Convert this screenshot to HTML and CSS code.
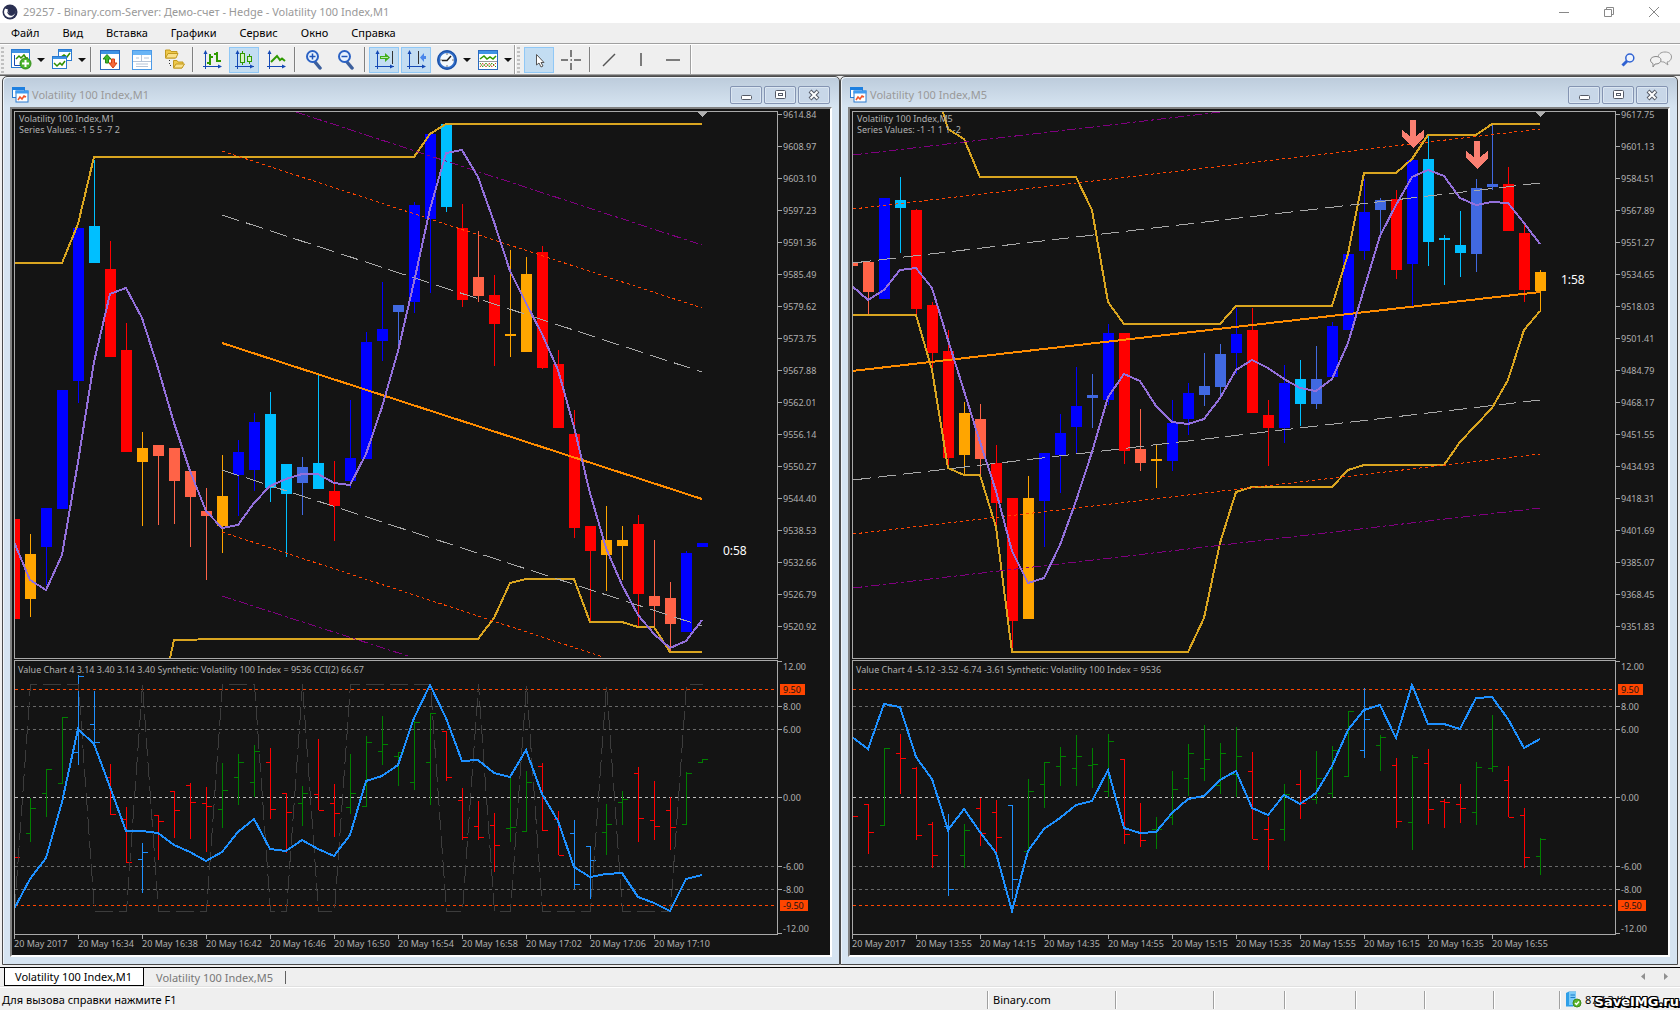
FILE: index.html
```html
<!DOCTYPE html>
<html lang="ru">
<head>
<meta charset="utf-8">
<title>29257 - Binary.com-Server: Демо-счет - Hedge - Volatility 100 Index,M1</title>
<link rel="stylesheet" href="styles.css">
</head>
<body>
<header class="titlebar">
  <svg class="app-logo" viewBox="0 0 16 16" width="16" height="16"><circle cx="8" cy="8" r="7.5" fill="#2a3052"/><path d="M3.2 4.6A5.6 5.6 0 1 0 13 6.2 4 4 0 1 1 7 4.4 2.8 2.8 0 0 0 7.4 9.2 2.6 2.6 0 0 1 5.8 5 3.4 3.4 0 0 1 3.2 4.6Z" fill="#fff"/><circle cx="9.6" cy="6.6" r="2.6" fill="#2a3052"/></svg>
  <h1 class="app-title">29257 - Binary.com-Server: Демо-счет - Hedge - Volatility 100 Index,M1</h1>
  <div class="caption-buttons">
    <button aria-label="Свернуть"><svg width="12" height="12"><path d="M1 6.5H11" stroke="#888" fill="none"/></svg></button>
    <button aria-label="Развернуть"><svg width="12" height="12"><path d="M1.500 3.500H8.500V10.500H1.500ZM3.500 3V1.500H10.500V8.500H9" stroke="#888" fill="none"/></svg></button>
    <button aria-label="Закрыть"><svg width="12" height="12"><path d="M1 1L11 11M11 1L1 11" stroke="#888" fill="none"/></svg></button>
  </div>
</header>

<nav class="menubar">
  <button>Файл</button><button>Вид</button><button>Вставка</button><button>Графики</button><button>Сервис</button><button>Окно</button><button>Справка</button>
</nav>

<div class="toolbar">
  <div class="tool-group">
    <i class="grip"></i>
    <button class="tool drop first" aria-label="Новый график"><svg width="21" height="21"><rect x=".5" y=".5" width="18" height="18" fill="#fff" stroke="#2a7ad0"/><path d="M1 1H18V4H1Z" fill="#3f93e4"/><path d="M3.500 6V16.500H15" stroke="#1549b5" fill="none"/><path d="M5 10L8 7 10 9 13 6 15 9H17" stroke="#2f8f00" stroke-width="1.500" fill="none"/><circle cx="14.500" cy="14.500" r="5.500" fill="#4cb52c" stroke="#2e8a14"/><path d="M14.500 11V18M11 14.500H18" stroke="#fff" stroke-width="2"/></svg><i class="caret"></i></button>
    <button class="tool drop" aria-label="Профили"><svg width="21" height="21"><rect x="6.500" y=".5" width="13" height="11" fill="#fff" stroke="#2a7ad0"/><path d="M7 1H19V3H7Z" fill="#3f93e4"/><path d="M9 8L12 6 15 8 18 4" stroke="#2f8f00" stroke-width="1.500" fill="none"/><rect x=".5" y="7.500" width="14" height="12" fill="#fff" stroke="#2a7ad0"/><path d="M1 8H14V10H1Z" fill="#3f93e4"/><path d="M2 14L5 17 8 14 10 16 13 12" stroke="#2f8f00" stroke-width="1.500" fill="none"/></svg><i class="caret"></i></button>
    <i class="sep"></i>
    <button class="tool" aria-label="Обзор рынка"><svg width="20" height="20"><rect x=".5" y=".5" width="19" height="19" fill="#fff" stroke="#2a6ac0"/><path d="M1 1H19V4H1Z" fill="#3f93e4"/><path d="M3 9L7 4.500 11 9H8.500V13H5.500V9Z" fill="#3fb82a" stroke="#25841a"/><path d="M9 13L13 18 17 13H14.500V9H11.500V13Z" fill="#f46a3c" stroke="#d63e12"/></svg></button>
    <button class="tool" aria-label="Окно данных"><svg width="20" height="20"><rect x=".5" y=".5" width="19" height="19" fill="#fff" stroke="#4a9ae8"/><path d="M1 1H19V5H1Z" fill="#69b4f5"/><path d="M9.500 5V11M1 11.500H19M4 8H7M12 8H17M4 14H16M4 16.500H16" stroke="#b7c4d6" fill="none"/></svg></button>
    <button class="tool" aria-label="Навигатор"><svg width="21" height="21"><path d="M1.500 9V1H6L7 2.500H13V4L11 9Z" fill="#eec84a" stroke="#c29a20"/><path d="M1.500 9L4 4.500H14L12 9Z" fill="#f9e08a" stroke="#c29a20"/><path d="M5.500 11V16.500H9" stroke="#333" stroke-dasharray="1 2" fill="none"/><path d="M9.500 19V11.500H13L14 13H19V15L18 19Z" fill="#eec84a" stroke="#c29a20"/><path d="M9.500 19L12 15H20.500L18 19Z" fill="#f9e08a" stroke="#c29a20"/></svg></button>
    <i class="sep"></i>
    <button class="tool" aria-label="Бары"><svg width="20" height="20"><path d="M3.500 2V19M1 16.500H18" stroke="#1549b5" fill="none"/><path d="M1.500 4L3.500 0 5.500 4ZM16 14.500L20 16.500 16 18.500Z" fill="#1549b5"/><path d="M8 4V15M5 13H8M8 7H11M15 2V12M12 4H15M15 11H19" stroke="#2f9a00" stroke-width="2" fill="none"/></svg></button>
    <button class="tool on" aria-label="Японские свечи"><svg width="20" height="20"><path d="M3.500 2V19M1 16.500H20" stroke="#1549b5" fill="none"/><path d="M1.500 4L3.500 0 5.500 4ZM16 14.500L20 16.500 16 18.500Z" fill="#1549b5"/><path d="M8.500 1V15M15.500 4V14" stroke="#2f9a00"/><rect x="6.500" y="3.500" width="4" height="9" fill="#d6f2c4" stroke="#2f9a00"/><rect x="13.500" y="6.500" width="4" height="5" fill="#d6f2c4" stroke="#2f9a00"/></svg></button>
    <button class="tool" aria-label="Линия"><svg width="20" height="20"><path d="M3.500 2V19M1 16.500H18" stroke="#1549b5" fill="none"/><path d="M1.500 4L3.500 0 5.500 4ZM16 14.500L20 16.500 16 18.500Z" fill="#1549b5"/><path d="M5 12L11 6 14 10 16 8.500 19 11" stroke="#2f9a00" stroke-width="2" fill="none"/></svg></button>
    <i class="sep"></i>
    <button class="tool" aria-label="Увеличить"><svg width="20" height="20"><path d="M11 12L16 18" stroke="#3c5f9c" stroke-width="3.500" stroke-linecap="round"/><circle cx="8.500" cy="6.500" r="5.500" fill="#e9f3fe" stroke="#2b62c4" stroke-width="2"/><path d="M8.500 3.500V9.500M5.500 6.500H11.500" stroke="#1f55b8" stroke-width="1.500"/></svg></button>
    <button class="tool" aria-label="Уменьшить"><svg width="20" height="20"><path d="M11 12L16 18" stroke="#3c5f9c" stroke-width="3.500" stroke-linecap="round"/><circle cx="8.500" cy="6.500" r="5.500" fill="#e9f3fe" stroke="#2b62c4" stroke-width="2"/><path d="M5.500 6.500H11.500" stroke="#1f55b8" stroke-width="1.500"/></svg></button>
    <i class="sep"></i>
    <button class="tool on" aria-label="Автопрокрутка"><svg width="20" height="20"><path d="M3.500 2V19M1 16.500H20" stroke="#1549b5" fill="none"/><path d="M1.500 4L3.500 0 5.500 4ZM16 14.500L20 16.500 16 18.500Z" fill="#1549b5"/><path d="M18.500 1V14" stroke="#333"/><path d="M6 6H11V3L16 7.500 11 12V9H6Z" fill="#3fae1a"/><path d="M7 7.500H14" stroke="#b8ecaa"/></svg></button>
    <button class="tool on" aria-label="Сдвиг графика"><svg width="20" height="20"><path d="M3.500 2V19M1 16.500H18" stroke="#1549b5" fill="none"/><path d="M1.500 4L3.500 0 5.500 4ZM16 14.500L20 16.500 16 18.500Z" fill="#1549b5"/><path d="M12.500 1V14" stroke="#333"/><path d="M20 6H18V3L14 7.500 18 12V9H20Z" fill="#4a86ea"/></svg></button>
    <button class="tool drop" aria-label="Периоды"><svg width="20" height="20"><circle cx="10" cy="10" r="8.500" fill="#f5f9fd" stroke="#2f6cc8" stroke-width="3"/><circle cx="10" cy="10" r="9.200" fill="none" stroke="#1a4a9a"/><path d="M10 10.500L14 6M10.500 10.500H5" stroke="#222" stroke-width="1.500"/><path d="M10 3V5M10 15V17M3 10H5M15 10H17" stroke="#777"/></svg><i class="caret"></i></button>
    <button class="tool drop" aria-label="Шаблоны"><svg width="20" height="20"><rect x=".5" y=".5" width="19" height="19" fill="#fff" stroke="#2a6ac0"/><path d="M1 1H19V4H1Z" fill="#3f93e4"/><path d="M2 9L6 6 9 9 12 7 15 9 18 6" stroke="#2f9a00" stroke-width="1.500" fill="none"/><path d="M1 11.500H19" stroke="#999"/><path d="M2 17L5 13 8 17 11 13 14 17 18 13" stroke="#d5452c" stroke-dasharray="2 1" fill="none"/><path d="M2 13L5 17 8 13 11 17 14 13 18 17" stroke="#2f9a00" stroke-dasharray="2 1" fill="none"/></svg><i class="caret"></i></button>
  </div>
  <div class="tool-group">
    <i class="grip"></i>
    <button class="tool on" aria-label="Курсор"><svg width="20" height="20"><path d="M7.500 4.500V15L10 13 12 17 14 16 12 12.500H15Z" fill="#fff" stroke="#555"/></svg></button>
    <button class="tool" aria-label="Перекрестие"><svg width="20" height="20"><path d="M10 0V7M10 13V20M0 10H7M13 10H20M9.500 10H11" stroke="#555" stroke-width="1.500"/></svg></button>
    <i class="sep"></i>
    <button class="tool" aria-label="Трендовая линия"><svg width="20" height="20"><path d="M4 16L16 4" stroke="#555" stroke-width="1.500"/></svg></button>
    <button class="tool" aria-label="Вертикальная линия"><svg width="20" height="20"><path d="M10 3V16" stroke="#555" stroke-width="1.500"/></svg></button>
    <button class="tool" aria-label="Горизонтальная линия"><svg width="20" height="20"><path d="M3 10H17" stroke="#555" stroke-width="1.500"/></svg></button>
  </div>
  <div class="tool-right">
    <button aria-label="Поиск"><svg width="14" height="14"><path d="M1.500 12.500L6 8" stroke="#2f62d2" stroke-width="3"/><circle cx="8.800" cy="5" r="4" fill="#eef4fd" stroke="#2f62d2" stroke-width="1.500"/></svg></button>
    <button aria-label="Чат"><svg width="22" height="17"><path d="M8 7C8 3 11 1 15 1S21.500 3 21.500 6 19 11 17 11L18 14 14 11C10 11 8 9 8 7Z" fill="#f2f2f2" stroke="#999"/><path d="M.5 9C.5 7 3 5.500 6 5.500S11 7 11 9 9 13 6 13H5L3 16V12.500C1.500 12 .5 10.500 .5 9Z" fill="#f2f2f2" stroke="#888"/></svg></button>
  </div>
</div>

<main class="workspace">
  <section class="window">
    <div class="window-bar">
      <svg class="window-icon" width="17" height="17"><rect x=".5" y=".5" width="12" height="10" fill="#fff" stroke="#2a7ad0"/><path d="M0 0H13V3H0Z" fill="#1e80e0"/><rect x="4" y="4" width="12" height="11" fill="#fff" stroke="#2a7ad0"/><path d="M3.500 3.500H16.500V6.500H3.500Z" fill="#3f9bf0"/><path d="M6 13L8 10 10 12 12 9 14 10" stroke="#f0552a" stroke-width="1.500" fill="none"/></svg>
      <h2>Volatility 100 Index,M1</h2>
      <div class="window-buttons">
        <button aria-label="Свернуть"><svg width="14" height="12"><rect x="2.500" y="6.500" width="10" height="4" rx="1" fill="#fff" stroke="#555a66"/></svg></button>
        <button aria-label="Развернуть"><svg width="14" height="12"><rect x="2.500" y="1.500" width="10" height="8" rx="1" fill="#fff" stroke="#555a66"/><rect x="5.500" y="4.500" width="4" height="2" fill="#fff" stroke="#555a66"/></svg></button>
        <button aria-label="Закрыть"><svg width="14" height="12"><path d="M3 2L11 10M11 2L3 10" stroke="#555a66" stroke-width="4"/><path d="M3.500 2.500L10.500 9.500M10.500 2.500L3.500 9.500" stroke="#fff" stroke-width="2"/></svg></button>
      </div>
    </div>
    <div class="chart">
      <div class="plot">
        <svg class="price-plot" data-chart="m1" viewBox="0 112 762 546" preserveAspectRatio="none"></svg>
        <p class="legend">Volatility 100 Index,M1<br>Series Values: -1 5 5 -7 2</p>
        <span class="countdown" style="left:92.9%;top:79.5%">0:58</span>
      </div>
      <ol class="price-scale"><li>9614.84</li><li>9608.97</li><li>9603.10</li><li>9597.23</li><li>9591.36</li><li>9585.49</li><li>9579.62</li><li>9573.75</li><li>9567.88</li><li>9562.01</li><li>9556.14</li><li>9550.27</li><li>9544.40</li><li>9538.53</li><li>9532.66</li><li>9526.79</li><li>9520.92</li></ol>
      <div class="plot">
        <svg class="value-plot" data-chart="m1" viewBox="0 661 762 273" preserveAspectRatio="none"></svg>
        <p class="legend sub">Value Chart 4 3.14 3.40 3.14 3.40 Synthetic: Volatility 100 Index = 9536 CCI(2) 66.67</p>
      </div>
      <ol class="value-scale"><li class="top">12.00</li><li class="level"><b>9.50</b></li><li>8.00</li><li>6.00</li><li>0.00</li><li>-6.00</li><li>-8.00</li><li class="level"><b>-9.50</b></li><li class="bottom">-12.00</li></ol>
      <ol class="time-scale"><li>20 May 2017</li><li>20 May 16:34</li><li>20 May 16:38</li><li>20 May 16:42</li><li>20 May 16:46</li><li>20 May 16:50</li><li>20 May 16:54</li><li>20 May 16:58</li><li>20 May 17:02</li><li>20 May 17:06</li><li>20 May 17:10</li></ol>
    </div>
  </section>

  <section class="window">
    <div class="window-bar">
      <svg class="window-icon" width="17" height="17"><rect x=".5" y=".5" width="12" height="10" fill="#fff" stroke="#2a7ad0"/><path d="M0 0H13V3H0Z" fill="#1e80e0"/><rect x="4" y="4" width="12" height="11" fill="#fff" stroke="#2a7ad0"/><path d="M3.500 3.500H16.500V6.500H3.500Z" fill="#3f9bf0"/><path d="M6 13L8 10 10 12 12 9 14 10" stroke="#f0552a" stroke-width="1.500" fill="none"/></svg>
      <h2>Volatility 100 Index,M5</h2>
      <div class="window-buttons">
        <button aria-label="Свернуть"><svg width="14" height="12"><rect x="2.500" y="6.500" width="10" height="4" rx="1" fill="#fff" stroke="#555a66"/></svg></button>
        <button aria-label="Развернуть"><svg width="14" height="12"><rect x="2.500" y="1.500" width="10" height="8" rx="1" fill="#fff" stroke="#555a66"/><rect x="5.500" y="4.500" width="4" height="2" fill="#fff" stroke="#555a66"/></svg></button>
        <button aria-label="Закрыть"><svg width="14" height="12"><path d="M3 2L11 10M11 2L3 10" stroke="#555a66" stroke-width="4"/><path d="M3.500 2.500L10.500 9.500M10.500 2.500L3.500 9.500" stroke="#fff" stroke-width="2"/></svg></button>
      </div>
    </div>
    <div class="chart">
      <div class="plot">
        <svg class="price-plot" data-chart="m5" viewBox="0 112 762 546" preserveAspectRatio="none"></svg>
        <p class="legend">Volatility 100 Index,M5<br>Series Values: -1 -1 1 1 -2</p>
        <span class="countdown" style="left:92.9%;top:29.8%">1:58</span>
      </div>
      <ol class="price-scale"><li>9617.75</li><li>9601.13</li><li>9584.51</li><li>9567.89</li><li>9551.27</li><li>9534.65</li><li>9518.03</li><li>9501.41</li><li>9484.79</li><li>9468.17</li><li>9451.55</li><li>9434.93</li><li>9418.31</li><li>9401.69</li><li>9385.07</li><li>9368.45</li><li>9351.83</li></ol>
      <div class="plot">
        <svg class="value-plot" data-chart="m5" viewBox="0 661 762 273" preserveAspectRatio="none"></svg>
        <p class="legend sub">Value Chart 4 -5.12 -3.52 -6.74 -3.61 Synthetic: Volatility 100 Index = 9536</p>
      </div>
      <ol class="value-scale"><li class="top">12.00</li><li class="level"><b>9.50</b></li><li>8.00</li><li>6.00</li><li>0.00</li><li>-6.00</li><li>-8.00</li><li class="level"><b>-9.50</b></li><li class="bottom">-12.00</li></ol>
      <ol class="time-scale"><li>20 May 2017</li><li>20 May 13:55</li><li>20 May 14:15</li><li>20 May 14:35</li><li>20 May 14:55</li><li>20 May 15:15</li><li>20 May 15:35</li><li>20 May 15:55</li><li>20 May 16:15</li><li>20 May 16:35</li><li>20 May 16:55</li></ol>
    </div>
  </section>
</main>

<nav class="tabs">
  <button class="tab active">Volatility 100 Index,M1</button>
  <button class="tab">Volatility 100 Index,M5</button>
  <div class="tab-scroll">
    <button aria-label="Назад"><svg width="6" height="8"><path d="M5 0V7L1 3.500Z" fill="#909090"/></svg></button>
    <button aria-label="Вперед"><svg width="6" height="8"><path d="M1 0V7L5 3.500Z" fill="#909090"/></svg></button>
  </div>
</nav>

<footer class="statusbar">
  <span class="cell hint">Для вызова справки нажмите F1</span>
  <span class="cell server">Binary.com</span>
  <span class="cell c98"></span><span class="cell c71"></span><span class="cell c71"></span><span class="cell c69"></span><span class="cell c69"></span><span class="cell c66"></span>
  <span class="cell traffic"><svg width="17" height="17"><path d="M1 2L4 .5H11V14L8 15.500H1Z" fill="#2f9fe8"/><path d="M4 1H11V14H4Z" fill="#7ccbf7"/><path d="M5.500 4H10M5.500 6.500H10" stroke="#1f7cc8"/><circle cx="12" cy="12" r="4" fill="#5cb52a" stroke="#3f8a1a"/><path d="M10 12L11.500 13.500 14 10.500" stroke="#fff" stroke-width="1.500" fill="none"/></svg>87 / 3 Kb</span>
  <span class="watermark">SaveIMG.ru</span>
</footer>
<script src="chart.js"></script>
</body>
</html>
```
FILE: styles.css
```css
* { box-sizing: border-box; margin: 0; padding: 0; }
body {
  display: flex; flex-direction: column; height: 100vh; overflow: hidden;
  background: #efefef; color: #000;
  font: 11px/16px "Noto Sans", "Open Sans", sans-serif;
}
button { font: inherit; color: inherit; background: none; border: 0; }
svg { display: block; flex: none; }
ol { list-style: none; }

.titlebar { display: flex; align-items: center; height: 23px; flex: none; padding-left: 2px; background: #fff; color: #999; }
.app-title { flex: 1; padding-left: 5px; font-size: 11px; font-weight: 400; white-space: nowrap; }
.caption-buttons { display: flex; padding-right: 4px; }
.caption-buttons button { display: flex; justify-content: center; align-items: center; width: 45px; height: 20px; }

.menubar { display: flex; gap: 23px; height: 22px; flex: none; padding: 1px 11px 3px; line-height: 16px; border-bottom: 1px solid #fff; box-shadow: inset 0 -1px #a0a0a0; }

.toolbar { display: flex; height: 30px; flex: none; border-bottom: 1px solid #a0a0a0; }
.tool-group { display: flex; align-items: center; gap: 2px; padding-right: 1px; border-right: 1px solid #a0a0a0; box-shadow: 1px 0 #fff; }
.tool-group + .tool-group { padding-right: 2px; }
.grip { width: 3px; height: 26px; margin: 0 1px; background: repeating-linear-gradient(#c0c0c0 0 2px, transparent 2px 4px); }
.tool-group + .tool-group .grip { margin: 0 2px; }
.tool { display: flex; align-items: center; justify-content: center; width: 30px; height: 26px; flex: none; }
.tool.on { background: #c3ddf2; border: 1px solid #90c8f6; }
.drop { width: 39px; justify-content: space-between; padding: 0 1px 0 4px; }
.caret { border: 4px solid transparent; border-top-color: #111; border-bottom: 0; }
.sep { width: 2px; height: 25px; background: #808080; border-right: 1px solid #f4f4f4; margin: 0 1px; }
.tool-right { display: flex; align-items: center; gap: 15px; margin-left: auto; padding-right: 8px; }

.workspace { display: flex; flex: 1; min-height: 0; padding: 0 2px 2px; border-top: 1px solid #606060; }
.window {
  display: flex; flex-direction: column; flex: 1; min-width: 0; padding: 0 7px 7px;
  border: 1px solid #4a4a4a; border-radius: 5px 5px 0 0;
  background: linear-gradient(#bccbdb, #d6e4f1 30px); box-shadow: inset 1px 1px #eef4fa;
}
.window-bar { display: flex; align-items: center; height: 30px; flex: none; padding: 6px 2px 0; color: #999; }
.window-bar h2 { flex: 1; padding-left: 3px; font-size: 11px; font-weight: 400; }
.window-buttons { display: flex; gap: 2px; }
.window-buttons button { display: flex; align-items: center; justify-content: center; width: 32px; height: 18px; border: 1px solid #8494b2; border-radius: 2px; background: #c8d7e8; box-shadow: inset 0 0 0 1px #dbe6f1; }

.chart {
  display: grid; flex: 1; min-height: 0;
  grid-template: minmax(0, 548fr) minmax(0, 276fr) 20px / minmax(0, 1fr) 52px;
  padding: 2px 0 0 2px;
  background: #141414; color: #b0b0b0; font-size: 9px; line-height: 11px;
  border: 2px solid; border-color: #808080 #fff #fff #808080;
}
.plot { position: relative; display: grid; border: 1px solid #a9a9a9; overflow: hidden; }
.plot + .price-scale + .plot { margin-top: 1px; }
.plot > * { grid-area: 1 / 1; min-height: 0; min-width: 0; }
.plot svg { width: 100%; height: 100%; }
.legend { padding: 1px 0 0 4px; line-height: 11px; }
.legend.sub { padding: 3px 0 0 3px; }
.countdown { position: absolute; transform: translateY(-3px); color: #fff; font-size: 12px; line-height: 16px; }

.price-scale { display: flex; flex-direction: column; justify-content: space-between; padding: 0 0 27px; margin-top: -2px; }
.price-scale li, .value-scale li { display: flex; align-items: center; gap: 1px; height: 11px; white-space: nowrap; }
.price-scale li::before, .value-scale li::before { content: ""; width: 4px; height: 1px; background: #a9a9a9; }
.value-scale { display: grid; grid-template-rows: 23fr 17fr 23fr 68fr 69fr 23fr 16fr 23fr 11fr; padding: 2px 0 1px; }
.value-scale .top::before { align-self: flex-start; }
.value-scale .bottom::before { align-self: flex-end; }
.value-scale .level { gap: 0; }
.value-scale .level::before { width: 2px; background: none; }
.value-scale b { padding: 0 4px 0 3px; background: #ff4500; color: #141414; font-weight: 400; }
.time-scale { grid-column: 1 / 3; display: flex; margin-right: 52px; }
.time-scale li { flex: 0 0 calc(100% / 764 * 64); padding-top: 3px; white-space: nowrap; background: linear-gradient(#a9a9a9, #a9a9a9) 0 0 / 1px 4px no-repeat; }

.plot path, .plot polyline, .plot polygon { vector-effect: non-scaling-stroke; shape-rendering: crispEdges; fill: none; }
.blue { stroke: #0000ff; }
.sky { stroke: #00bfff; }
.royal { stroke: #4169e1; }
.red { stroke: #ff0000; }
.tomato { stroke: #ff6347; }
.orange { stroke: #ffa500; }
.dodger { stroke: #1e90ff; }
.green { stroke: #008000; }
.gold { stroke: #daa520; stroke-width: 2; }
.average { stroke: #9370db; stroke-width: 2; }
.regression { stroke: #ff8c00; stroke-width: 2; }
.dash-gray { stroke: #a9a9a9; stroke-dasharray: 18 7; }
.dash-orange { stroke: #ff4500; stroke-dasharray: 3 3; }
.dash-purple { stroke: #800080; stroke-dasharray: 9 3 3 3; }
.synthetic { stroke: #1e90ff; stroke-width: 2; }
.cci { stroke: #3c3c3c; stroke-dasharray: 18 6; }
.level-dim { stroke: #696969; stroke-dasharray: 3 3; }
.level-zero { stroke: #c0c0c0; stroke-dasharray: 3 3; }
.level-hot { stroke: #ff4500; stroke-dasharray: 3 3; }
.plot .marker { fill: #b0b0b0; }
.plot .arrow { fill: #fa8072; }

.tabs { display: flex; height: 21px; flex: none; padding-left: 4px; border-top: 1px solid #000; border-bottom: 1px solid #fff; box-shadow: inset 0 -1px #e0e0e0; }
.tab { height: 18px; padding: 0 12px; line-height: 17px; color: #777; }
.tab.active { padding: 0 11px 0 10px; background: #fff; color: #000; border: solid #000; border-width: 0 1px 1px; line-height: 16px; }
.tab:not(.active) { height: 13px; margin-top: 3px; line-height: 13px; border-right: 1px solid #606060; }
.tab-scroll { display: flex; align-items: center; gap: 17px; margin-left: auto; padding: 0 11px 2px 0; }

.statusbar { position: relative; display: flex; height: 22px; flex: none; line-height: 16px; }
.cell { flex: none; height: 18px; margin-top: 3px; padding-left: 5px; border-left: 1px solid #a0a0a0; box-shadow: inset 1px 0 #fff; white-space: nowrap; line-height: 18px; }
.hint { flex: 1; padding-left: 2px; border: 0; box-shadow: none; }
.server { width: 128px; }
.c98 { width: 98px; }
.c71 { width: 71px; }
.c69 { width: 69px; }
.c66 { width: 66px; }
.traffic { display: flex; gap: 3px; width: 121px; }
.watermark { position: absolute; right: 1px; bottom: 0; color: #fff; font: bold 13px/16px "DejaVu Sans", sans-serif; text-shadow: 1px 0 #000, -1px 0 #000, 0 1px #000, 0 -1px #000, 1px 1px #000, -1px -1px #000, 1px -1px #000, -1px 1px #000, 2px 2px #000; }
```
FILE: chart.js
```js
// Candles are [colour, high, low, body top, body bottom]; one bar every 16 units.
// Bars are [colour, high, low, open, close].
const STEP = 16;
const charts = {
  m1: {
    candles: `red 519 619 519 619|orange 534 617 554 599|blue 508 585 508 547|blue 390 509 390 509|blue 228 403 228 381|sky 160 263 226 263|red 241 357 269 357|red 323 452 350 452|orange 432 526 448 462|tomato 445 525 445 456|tomato 448 524 448 481|tomato 471 547 471 497|tomato 488 580 511 516|orange 455 553 496 526|blue 440 516 452 475|blue 413 491 422 470|sky 392 502 414 488|sky 464 557 464 494|royal 457 515 467 483|sky 374 489 463 489|red 461 541 491 506|blue 400 488 458 481|blue 332 459 342 459|blue 282 361 329 341|royal 305 348 305 312|blue 202 313 205 302|blue 134 293 134 219|sky 124 212 124 207|red 204 307 228 300|tomato 231 302 277 296|red 275 366 295 324|orange 250 357 334 336|orange 257 352 274 352|red 246 369 252 368|red 350 428 364 428|red 410 538 434 528|red 526 622 526 551|orange 506 591 540 555|orange 526 580 540 546|red 515 626 524 594|tomato 540 627 596 606|tomato 582 651 598 624|blue 551 632 553 632|blue 543 547 543 547`,
    average: '542 580 590 555 462 362 294 288 318 368 423 471 511 528 525 503 486 479 474 474 483 485 454 407 351 282 209 153 150 177 222 271 303 334 370 427 493 548 585 615 634 648 641 620',
    lines: [
      ['gold', '-1,263 47,263 63,224 79,157 399,157 415,134 431,124 687,124'],
      ['gold', '155,658 159,640 207,639 463,639 479,618 495,583 511,579 559,579 575,622 607,622 623,627 639,627 655,652 687,652'],
      ['dash-purple', '281,112 687,245'], ['dash-orange', '207,151 687,308'], ['dash-gray', '207,215 687,372'],
      ['dash-gray', '207,470 687,626'], ['dash-orange', '207,532 588,657'], ['dash-purple', '207,596 396,657'],
      ['regression', '207,343 687,499']
    ],
    arrows: [],
    bars: `red 857 857 857 857|green 798 842 833 808|green 769 817 793 769|green 717 783 783 717|dodger 675 765 752 676|dodger 691 744 724 742|red 764 815 777 814|red 807 863 819 862|dodger 843 893 859 852|red 815 860 815 821|red 791 838 791 810|red 783 839 785 802|red 787 852 803 806|green 763 828 809 790|green 754 805 777 762|green 745 797 782 751|red 748 819 762 809|red 793 853 793 812|green 786 826 803 793|red 739 810 794 810|red 784 837 803 813|green 754 814 807 793|green 736 807 806 742|green 716 765 751 744|green 752 786 756 752|green 721 790 782 722|green 713 805 762 713|red 731 781 731 777|red 788 840 800 837|red 801 840 826 837|red 813 872 825 845|green 775 842 828 827|green 771 831 831 782|red 763 831 766 830|red 811 855 819 855|dodger 820 889 833 884|dodger 846 899 846 860|green 804 855 832 824|green 791 825 802 799|red 767 842 773 818|red 781 840 820 826|red 797 850 810 827|green 772 824 824 773|green 759 762 762 759`,
    synthetic: '909 879 858 802 729 744 787 831 831 833 845 852 861 852 832 819 849 851 840 849 856 835 781 776 765 718 685 718 761 760 773 777 750 794 821 867 877 874 873 897 903 911 879 875',
    cci: '0,911 1,684 4,684 5,911 7,911 8,684 9,911 12,911 13,684 15,684 16,911 17,911 18,684 19,911 20,911 21,684 26,684 27,911 28,911 29,684 30,911 31,911 32,684 33,911 36,911 37,684 38,911 41,911 42,684 43,684'
  },
  m5: {
    candles: `tomato 262 266 262 266|tomato 262 314 262 292|blue 198 299 198 299|sky 177 253 200 208|red 209 315 210 309|red 302 368 305 353|red 330 467 351 458|orange 402 474 413 455|tomato 404 474 419 459|red 445 527 463 503|red 498 651 498 621|orange 476 619 498 619|blue 453 547 453 501|blue 414 493 433 455|blue 367 454 406 427|royal 374 428 395 398|blue 324 405 333 400|red 333 464 333 451|tomato 409 471 449 463|orange 445 488 459 461|blue 400 471 423 461|blue 383 435 393 419|royal 353 406 386 395|royal 344 395 354 387|blue 308 374 334 353|red 308 413 330 413|red 400 466 415 428|blue 365 443 383 428|sky 360 426 379 404|royal 346 409 379 404|blue 322 377 326 377|blue 254 330 254 330|blue 179 260 212 251|royal 198 234 200 210|red 190 279 199 270|blue 160 306 160 264|sky 136 266 159 242|sky 235 285 238 240|sky 211 277 245 253|royal 179 272 188 254|royal 125 190 184 187|red 167 231 184 231|red 225 302 233 290|orange 270 311 272 291`,
    average: '286 300 290 270 268 288 340 391 442 491 551 583 578 545 501 452 397 374 381 406 422 424 419 398 370 360 368 379 388 391 379 343 289 236 205 177 170 176 198 205 202 203 223 244',
    lines: [
      ['gold', '90,112 95,129 111,139 127,177 223,177 239,210 255,302 271,324 367,324 383,306 479,306 495,254 511,173 543,173 559,159 575,135 623,135 639,124 687,124'],
      ['gold', '-1,315 63,315 79,370 95,468 111,475 127,475 143,527 159,652 335,652 351,618 367,543 383,492 399,487 479,487 495,470 511,465 591,465 607,442 623,425 639,408 655,380 671,330 687,311'],
      ['dash-purple', '0,155 368,112'], ['dash-orange', '0,209 687,129'], ['dash-gray', '0,263 687,183'],
      ['dash-gray', '0,480 687,400'], ['dash-orange', '0,534 687,454'], ['dash-purple', '0,588 687,508'],
      ['regression', '-1,371 687,292']
    ],
    arrows: [[560, 120], [624, 141]],
    bars: `red 816 816 816 816|red 804 854 804 832|green 748 825 825 748|red 734 794 753 758|red 767 840 768 835|red 822 868 824 855|dodger 814 896 826 889|green 824 868 855 830|red 798 846 808 833|red 800 852 812 837|dodger 805 899 805 879|green 779 851 851 791|green 762 808 784 762|green 747 786 766 756|green 735 786 768 756|green 748 788 765 764|green 734 797 791 741|red 759 844 759 834|red 803 847 832 840|green 817 849 829 829|green 771 825 817 789|green 744 796 778 753|green 725 781 768 759|green 743 794 785 753|green 727 797 774 756|red 752 839 771 839|red 817 870 829 839|green 784 841 829 794|red 770 819 784 803|green 751 804 799 778|green 746 798 793 750|green 711 777 776 711|dodger 688 758 750 719|green 735 771 745 737|red 758 828 765 821|green 755 850 822 757|red 749 824 763 809|red 799 828 801 802|red 784 823 804 808|green 762 825 812 767|green 715 772 768 766|red 766 817 780 817|red 808 868 815 857|green 838 875 856 839`,
    synthetic: '737 749 704 707 757 779 830 809 832 853 911 851 829 818 805 801 770 828 833 832 813 799 796 780 771 808 815 795 804 793 766 730 710 705 738 685 724 724 729 698 697 719 748 739',
    cci: ''
  }
};

const rows = text => text.split('|').map(r => {
  const [color, ...values] = r.split(' ');
  return [color, ...values.map(Number)];
});
const path = (cls, d, width = 1) => `<path class="${cls}" stroke-width="${width}" d="${d}"/>`;
const line = (cls, points) => `<polyline class="${cls}" points="${points}"/>`;
const series = text => text.split(' ').map((y, k) => `${k * STEP - 1},${y}`).join(' ');

function drawPrice(c) {
  let out = '';
  rows(c.candles).forEach(([color, high, low, top, bottom], k) => {
    const x = k * STEP - 0.5;
    out += path(color, `M${x} ${high}V${low}`) + path(color, `M${x} ${top}V${bottom}`, 11);
  });
  c.lines.forEach(([cls, points]) => { out += line(cls, points); });
  out += line('average', series(c.average));
  c.arrows.forEach(([x, y]) => {
    const shape = [[-3, 0], [3, 0], [3, 16], [11, 10], [11, 17], [0, 28], [-11, 17], [-11, 10], [-3, 16]];
    out += `<polygon class="arrow" points="${shape.map(([a, b]) => `${x + a},${y + b}`).join(' ')}"/>`;
  });
  return out + '<polygon class="marker" points="682,112 692,112 687,117"/>';
}

function drawValue(c) {
  let out = '';
  [['level-hot', 689.5], ['level-dim', 706.5], ['level-dim', 729.5], ['level-zero', 797.5],
    ['level-dim', 866.5], ['level-dim', 889.5], ['level-hot', 905.5]]
    .forEach(([cls, y]) => { out += path(cls, `M0 ${y}H762`); });
  rows(c.bars).forEach(([color, high, low, open, close], k) => {
    const x = k * STEP - 0.5;
    out += path(color, `M${x} ${high}V${low}M${x - 5} ${open + 0.5}H${x}M${x} ${close + 0.5}H${x + 5.5}`);
  });
  if (c.cci) {
    out += line('cci', c.cci.split(' ').map(p => {
      const [k, y] = p.split(',').map(Number);
      return `${k * STEP - 0.5},${y + 0.5}`;
    }).join(' '));
  }
  return out + line('synthetic', series(c.synthetic));
}

document.querySelectorAll('.price-plot').forEach(el => { el.innerHTML = drawPrice(charts[el.dataset.chart]); });
document.querySelectorAll('.value-plot').forEach(el => { el.innerHTML = drawValue(charts[el.dataset.chart]); });
```
